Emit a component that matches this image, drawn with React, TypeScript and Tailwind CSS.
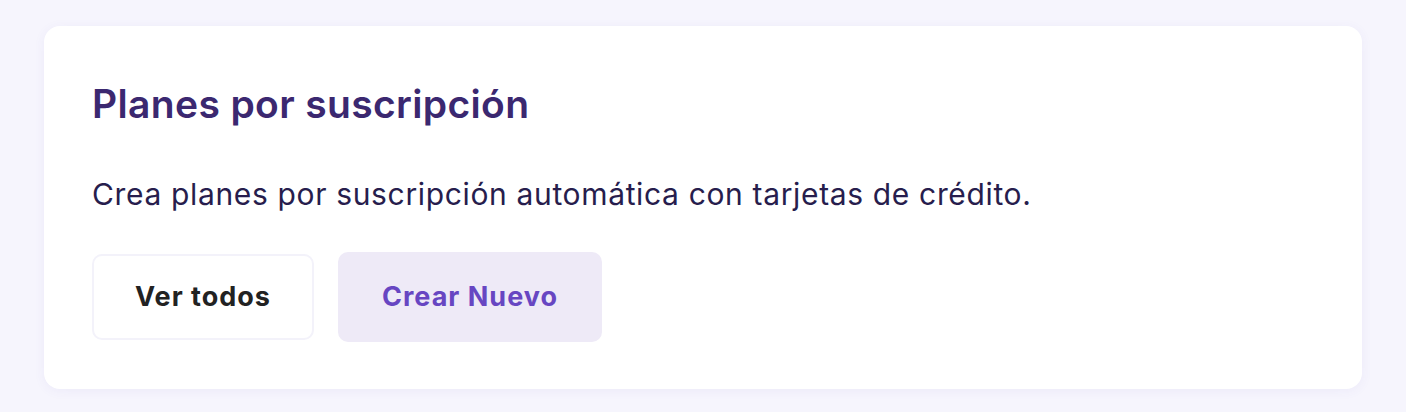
const App = () => {
  return (
    <div
      className="min-h-[412px] bg-[#f6f5fd] px-[44px] pt-[26px] pb-[23px]"
      style={{ fontFamily: 'Inter, "Noto Sans", sans-serif' }}
    >
      <div className="rounded-[16px] bg-white px-[48px] pt-[54px] pb-[47px] shadow-[0_2px_12px_rgba(90,70,180,0.06)]">
        <h2 className="text-[39px] leading-[48px] font-semibold tracking-[0.35px] text-[#3b2870]">
          Planes por suscripción
        </h2>
        <p className="mt-[48px] text-[30px] leading-[36px] tracking-[0.65px] text-[#271d4d]">
          Crea planes por suscripción automática con tarjetas de crédito.
        </p>
        <div className="mt-[40px] flex items-center gap-[24px]">
          <button className="h-[86px] w-[222px] rounded-[10px] border-2 border-[#f3f2fa] bg-white text-[27px] font-bold tracking-[1px] text-[#222222]">
            Ver todos
          </button>
          <button className="h-[90px] w-[264px] rounded-[10px] bg-[#eeeaf7] text-[27px] font-bold tracking-[1px] text-[#6746c2]">
            Crear Nuevo
          </button>
        </div>
      </div>
    </div>
  );
};

export default App;
